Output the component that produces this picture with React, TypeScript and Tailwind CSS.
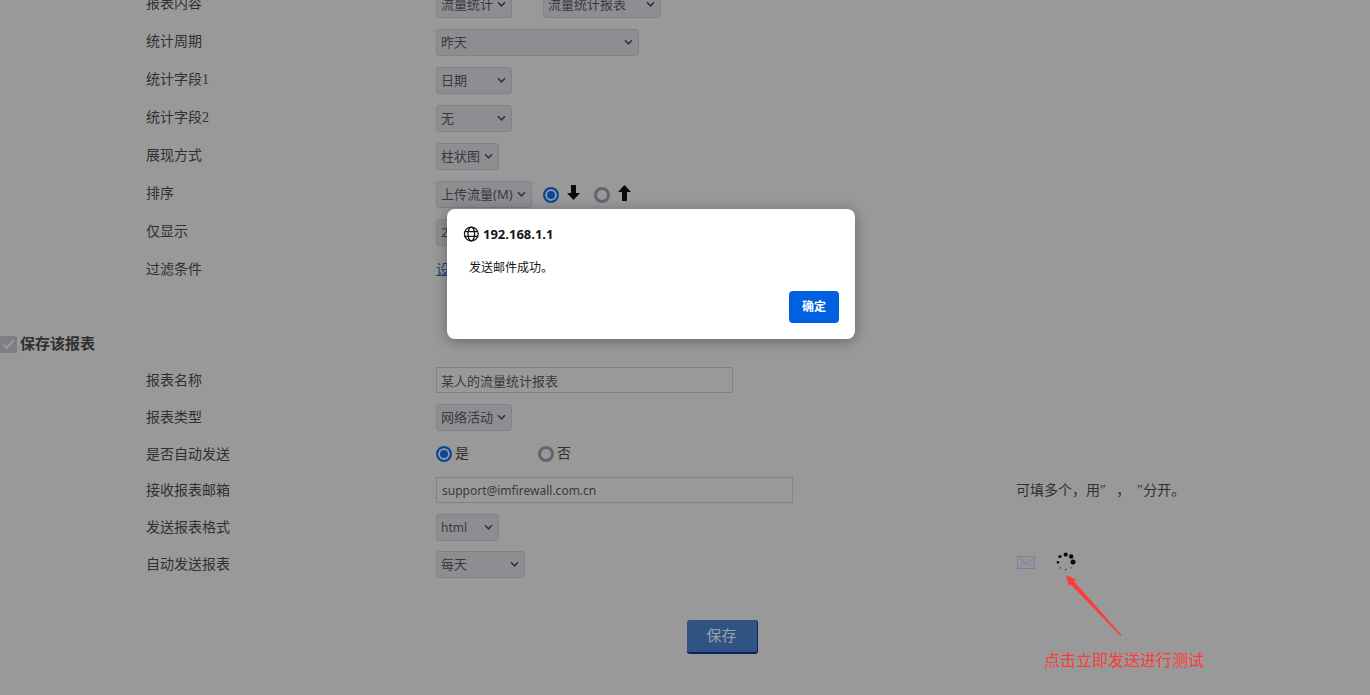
import { useState } from "react";
import type { ReactNode } from "react";

const ROW =
  "grid grid-cols-[146px_290px_580px_1fr] items-start pt-[6px] text-sm";

const RADIO =
  "h-4 w-4 shrink-0 appearance-none rounded-full border-3 border-[#656470] checked:border-2 checked:border-[#0a469a] checked:bg-[#0a469a] checked:shadow-[inset_0_0_0_2px_#99999a]";

const INPUT =
  "h-[26px] border border-[#838386] bg-[#99999a] font-['Noto_Sans','Noto_Sans_CJK_SC',sans-serif] text-[#39393b] outline-none";

function Row({
  label,
  htmlFor,
  tall,
  short,
  children,
  note,
}: {
  label: string;
  htmlFor?: string;
  tall?: boolean;
  short?: boolean;
  children: ReactNode;
  note?: ReactNode;
}) {
  const height = tall ? "h-[38px]" : short ? "h-[36px]" : "h-[37px]";
  return (
    <div className={`${ROW} ${height}`}>
      <label
        htmlFor={htmlFor}
        className={`col-start-2 ${tall ? "leading-[26px]" : "leading-[28px]"}`}
      >
        {label}
      </label>
      <div className="flex items-start">{children}</div>
      {note && <div className="leading-[28px]">{note}</div>}
    </div>
  );
}

function Select({
  id,
  width,
  value,
  label,
  textSize = "text-[13px]",
}: {
  id: string;
  width: string;
  value: string;
  label?: string;
  textSize?: string;
}) {
  return (
    <div className={`relative h-[27px] ${width}`}>
      <select
        id={id}
        aria-label={label}
        className={`h-full w-full appearance-none rounded-[3px] border border-[#838387] bg-[#8e8d92] pl-1 font-['Noto_Sans','Noto_Sans_CJK_SC',sans-serif] text-[#39393b] ${textSize}`}
      >
        <option>{value}</option>
      </select>
      <svg
        className="pointer-events-none absolute right-[5px] top-[10px]"
        width="10"
        height="7"
        viewBox="0 0 10 7"
        fill="none"
        stroke="#333336"
        strokeWidth="1.5"
        aria-hidden="true"
      >
        <path d="M1 1.200 4.500 4.800 8 1.200" />
      </svg>
    </div>
  );
}

function SortArrow({ up }: { up?: boolean }) {
  return (
    <svg width="13" height="16" viewBox="0 0 13 16" fill="#0a0a0b" aria-hidden="true">
      {up ? (
        <path d="M6.500 0 13 7H9v9H4V7H0z" />
      ) : (
        <path d="M4 0h5v8h4l-6.500 7L0 8h4z" />
      )}
    </svg>
  );
}

function MailIcon() {
  return (
    <svg width="18" height="13" viewBox="0 0 18 13" fill="none" stroke="#7c828f" aria-hidden="true">
      <rect x=".5" y=".5" width="17" height="12" fill="#9397a0" />
      <path d="m2 2 7 6.500L16 2M2 11l4.500-4M16 11l-4.500-4" />
    </svg>
  );
}

function Spinner() {
  return (
    <svg width="20" height="20" viewBox="0 0 20 20" fill="#0b0b0c" aria-hidden="true">
      <circle cx="17" cy="10" r="2.500" />
      <circle cx="15.200" cy="4.500" r="2.200" />
      <circle cx="9.700" cy="2.600" r="2.100" />
      <circle cx="4" cy="4.500" r="1.600" />
      <circle cx="2" cy="10.200" r="1.300" />
      <circle cx="4" cy="15.700" r="1" opacity=".4" />
      <circle cx="9.700" cy="17.600" r="1" opacity=".45" />
      <circle cx="15.200" cy="15.700" r="1" opacity=".3" />
    </svg>
  );
}

function GlobeIcon() {
  return (
    <svg
      width="16"
      height="16"
      viewBox="0 0 16 16"
      fill="none"
      stroke="#15141a"
      strokeWidth="1.3"
      aria-hidden="true"
    >
      <circle cx="8.300" cy="8" r="6.900" />
      <ellipse cx="8.300" cy="8" rx="3.300" ry="6.900" />
      <path d="M1.800 5.700h13M1.800 10.300h13" />
    </svg>
  );
}

function AlertDialog({ onClose }: { onClose: () => void }) {
  return (
    <div
      role="alertdialog"
      aria-labelledby="alert-title"
      aria-describedby="alert-text"
      className="absolute left-[447px] top-[209px] w-[408px] rounded-lg bg-white p-4 font-['Noto_Sans','Noto_Sans_CJK_SC',sans-serif] text-xs text-[#15141a] shadow-[0_2px_14px_rgba(0,0,0,0.35)]"
    >
      <div className="flex items-center gap-1">
        <GlobeIcon />
        <h2 id="alert-title" className="text-[13px] leading-[18px] font-bold">
          192.168.1.1
        </h2>
      </div>
      <p id="alert-text" className="mt-[17px] px-[6px]">
        发送邮件成功。
      </p>
      <div className="mt-[15px] flex justify-end">
        <button
          type="button"
          onClick={onClose}
          className="h-8 w-[50px] rounded bg-[#0061e0] font-bold text-white"
        >
          确定
        </button>
      </div>
    </div>
  );
}

export default function App() {
  const [alertOpen, setAlertOpen] = useState(true);

  return (
    <div className="relative min-h-screen overflow-hidden bg-[#99999a] font-['Liberation_Serif','Noto_Sans_CJK_SC',sans-serif] text-[#303032]">
      <form className="-mt-[15px]" onSubmit={(e) => e.preventDefault()}>
        <Row label="报表内容" htmlFor="content" tall>
          <Select id="content" width="w-[76px]" value="流量统计" />
          <div className="ml-[31px]">
            <Select id="report" width="w-[118px]" value="流量统计报表" label="报表" />
          </div>
        </Row>
        <Row label="统计周期" htmlFor="period" tall>
          <Select id="period" width="w-[203px]" value="昨天" />
        </Row>
        <Row label="统计字段1" htmlFor="field1" tall>
          <Select id="field1" width="w-[76px]" value="日期" />
        </Row>
        <Row label="统计字段2" htmlFor="field2" tall>
          <Select id="field2" width="w-[76px]" value="无" />
        </Row>
        <Row label="展现方式" htmlFor="chart" tall>
          <Select id="chart" width="w-[63px]" value="柱状图" />
        </Row>
        <Row label="排序" htmlFor="sort" tall>
          <Select id="sort" width="w-[96px]" value="上传流量(M)" />
          <label className="ml-[11px] flex h-6 items-center gap-2">
            <input type="radio" name="order" aria-label="降序" defaultChecked className={`${RADIO} mt-1`} />
            <SortArrow />
          </label>
          <label className="ml-[14px] flex h-6 items-center gap-2">
            <input type="radio" name="order" aria-label="升序" className={`${RADIO} mt-1`} />
            <SortArrow up />
          </label>
        </Row>
        <Row label="仅显示" htmlFor="limit" tall>
          <Select id="limit" width="w-[76px]" value="20" />
        </Row>
        <Row label="过滤条件" tall>
          <a href="#filter" className="leading-[26px] text-[#1b4876] underline">
            设置
          </a>
        </Row>

        <label className="mt-[45px] flex h-5 items-center gap-[3px] text-[15px] font-bold">
          <span className="relative h-[17px] w-[17px]">
            <input
              type="checkbox"
              defaultChecked
              disabled
              className="block h-[17px] w-[17px] appearance-none rounded-[2px] bg-[#7f7e85]"
            />
            <svg
              className="pointer-events-none absolute left-[2px] top-[3px]"
              width="13"
              height="11"
              viewBox="0 0 13 11"
              fill="none"
              stroke="#9b9b9e"
              strokeWidth="2"
              aria-hidden="true"
            >
              <path d="m1.500 6 3 3L11.500 1.500" />
            </svg>
          </span>
          保存该报表
        </label>

        <div className="mt-[7px]">
          <Row label="报表名称" htmlFor="name">
            <input
              id="name"
              type="text"
              defaultValue="某人的流量统计报表"
              className={`${INPUT} w-[297px] px-1 text-[13px]`}
            />
          </Row>
          <Row label="报表类型" htmlFor="type">
            <Select id="type" width="w-[76px]" value="网络活动" />
          </Row>
          <Row label="是否自动发送" short>
            <label className="flex h-[26px] w-[102px] items-center gap-[3px]">
              <input type="radio" name="auto" defaultChecked className={RADIO} />是
            </label>
            <label className="flex h-[26px] items-center gap-[3px]">
              <input type="radio" name="auto" className={RADIO} />否
            </label>
          </Row>
          <Row
            label="接收报表邮箱"
            htmlFor="email"
            note={<span className="whitespace-pre">可填多个，用″{"   "}，{"  "}″分开。</span>}
          >
            <input
              id="email"
              type="text"
              defaultValue="support@imfirewall.com.cn"
              className={`${INPUT} w-[357px] px-[5px] text-xs`}
            />
          </Row>
          <Row label="发送报表格式" htmlFor="format">
            <Select id="format" width="w-[63px]" value="html" textSize="text-xs" />
          </Row>
          <Row
            label="自动发送报表"
            htmlFor="schedule"
            note={
              <div className="flex h-[22px] items-center gap-[21px] pl-px">
                <button type="button" aria-label="立即发送">
                  <MailIcon />
                </button>
                <Spinner />
              </div>
            }
          >
            <Select id="schedule" width="w-[89px]" value="每天" />
          </Row>
        </div>

        <div className="mt-[38px] flex justify-center pl-[74px]">
          <button
            type="submit"
            className="h-[34px] w-[71px] rounded-[3px] border-b-2 border-r border-[#0e2163] bg-[#305383] text-[15px] text-[#98a3a8]"
          >
            保存
          </button>
        </div>
      </form>

      <div className="absolute left-[1044px] top-[575px] font-['Noto_Sans_CJK_SC',sans-serif] text-base text-[#ff3b38]">
        <svg className="ml-[22px]" width="56" height="61" viewBox="0 0 56 61" fill="#ff3b38" aria-hidden="true">
          <path d="M0 0 10 4.500 8 6.500 55.500 60 54.500 61 4.800 9.500 3 11z" />
        </svg>
        <p className="mt-[11px] whitespace-nowrap">点击立即发送进行测试</p>
      </div>

      {alertOpen && <AlertDialog onClose={() => setAlertOpen(false)} />}
    </div>
  );
}
